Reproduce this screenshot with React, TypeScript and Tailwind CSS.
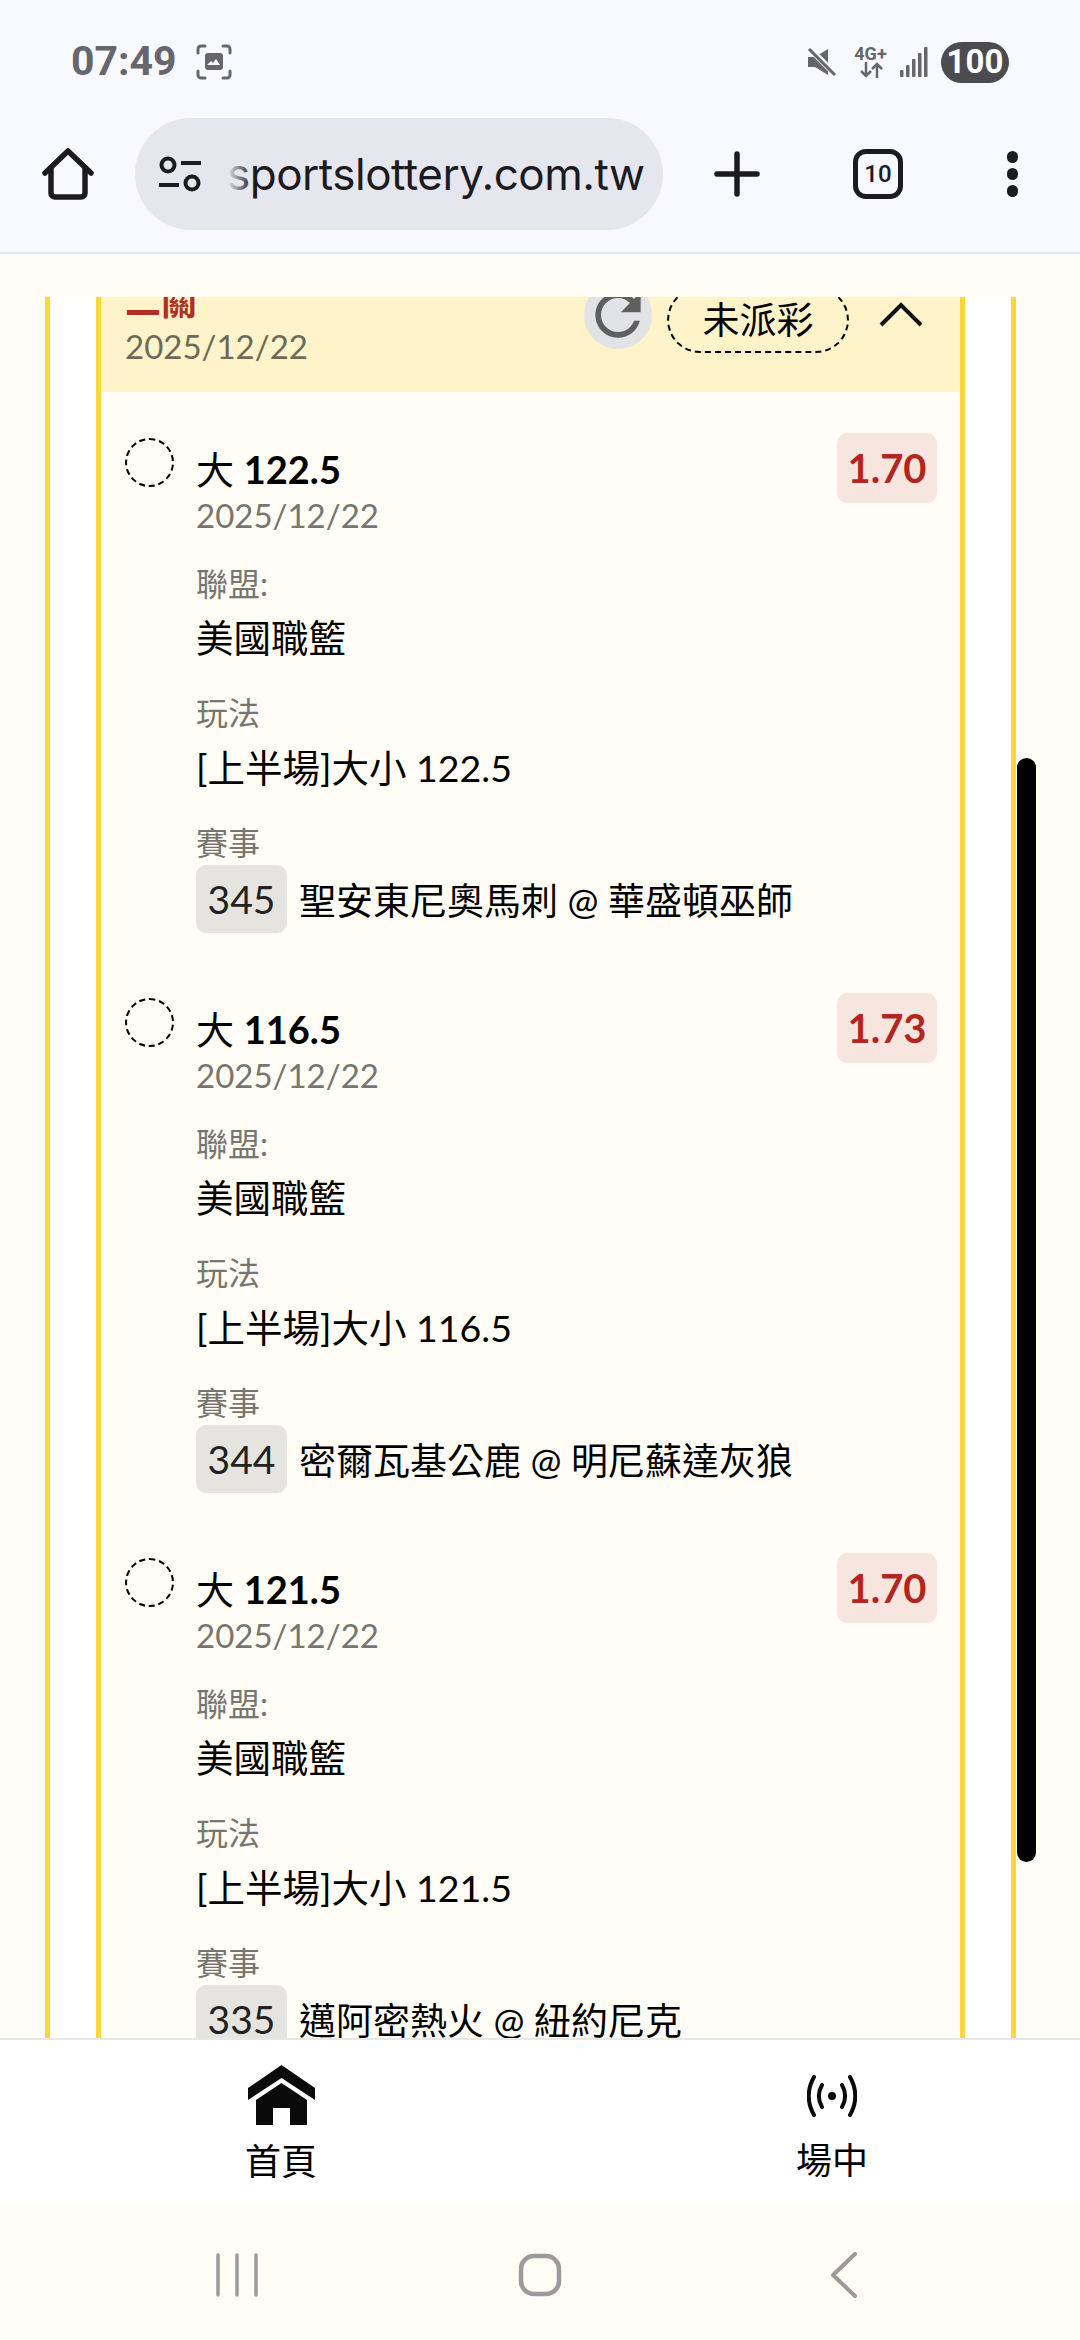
import React from "react";

const cjk = "font-['Lato','Noto_Sans_CJK_TC',sans-serif]";

function Bet({ title, odds, play, no, match }: { title: string; odds: string; play: string; no: string; match: string }) {
  return (
    <div className="flex h-[560px] pl-[24px] pr-[23px] pt-[41px]">
      <div className="w-[49px] h-[49px] rounded-full border-2 border-dashed border-black mr-[22px] mt-[5px] shrink-0" />
      <div className="flex-1 min-w-0">
        <div className="flex justify-between items-start">
          <div className="pt-[13px]">
            <div className="text-[38px] leading-[46px] text-black">
              大 <span className="font-bold">{title}</span>
            </div>
            <div className="text-[33px] leading-[46px] text-[#77756f]">2025/12/22</div>
          </div>
          <div className="w-[100px] h-[70px] rounded-[10px] bg-[#f7e6df] flex items-center justify-center text-[#b3261e] text-[40px] font-bold">
            {odds}
          </div>
        </div>
        <div className="mt-[28px] text-[32px] leading-[36px] text-[#77756f]">聯盟:</div>
        <div className="mt-[14px] text-[37.5px] leading-[44px] text-black">美國職籃</div>
        <div className="mt-[35px] text-[32px] leading-[36px] text-[#77756f]">玩法</div>
        <div className="mt-[15px] text-[37.5px] leading-[44px] text-black">[上半場]大小 {play}</div>
        <div className="mt-[35px] text-[32px] leading-[36px] text-[#77756f]">賽事</div>
        <div className="flex items-center mt-[4px]">
          <div className="w-[91px] h-[68px] rounded-[10px] bg-[#e5e4df] flex items-center justify-center text-[39px] text-[#222]">{no}</div>
          <div className="ml-[12px] pt-[3px] text-[37px] text-black">{match}</div>
        </div>
      </div>
    </div>
  );
}

export default function App() {
  return (
    <div className={`w-[1080px] h-[2340px] flex flex-col overflow-hidden bg-[#fffdf5] ${cjk}`}>
      <div className="h-[254px] shrink-0 bg-[#f8f8ff] border-b-[2px] border-[#e4e4ec] flex flex-col">
        <div className="h-[120px] flex items-center justify-between pl-[71px] pr-[71px] pt-[4px]">
          <div className="flex items-center gap-[19px]">
            <span className="font-['Roboto',sans-serif] font-bold text-[41px] text-[#66666c]">07:49</span>
            <svg width="36" height="36" viewBox="0 0 36 36" fill="none" stroke="#66666c" strokeWidth="3" strokeLinecap="round">
              <path d="M2 9V5a3 3 0 0 1 3-3h4M27 2h4a3 3 0 0 1 3 3v4M34 27v4a3 3 0 0 1-3 3h-4M9 34H5a3 3 0 0 1-3-3v-4" />
              <rect x="9" y="9" width="18" height="17" rx="3" fill="#66666c" stroke="none" />
              <path d="M11 21l4-4 2 2 3-4 4 6z" fill="#f8f8ff" stroke="none" />
            </svg>
          </div>
          <div className="flex items-center">
            <svg width="30" height="28" viewBox="0 0 30 28" className="mr-[17px]">
              <path d="M1 9h7L21 1v26L8 19H1z" fill="#66666c" />
              <path d="M2 0l27 27" stroke="#f8f8ff" strokeWidth="6" />
              <path d="M2 1l26 26" stroke="#66666c" strokeWidth="3" />
            </svg>
            <div className="flex flex-col items-center mr-[13px] w-[33px] text-[#66666c]">
              <span className="font-['Roboto',sans-serif] font-bold text-[18px] leading-[16px]">4G+</span>
              <svg width="26" height="16" viewBox="0 0 26 16" fill="none" stroke="#66666c" strokeWidth="2.5">
                <path d="M8 0v14M3 9l5 5 5-5M19 16V2M14 7l5-5 5 5" />
              </svg>
            </div>
            <svg width="28" height="30" viewBox="0 0 28 30" className="mr-[13px]" fill="#66666c">
              <rect x="0" y="23" width="3.5" height="7" rx="1" />
              <rect x="6" y="18" width="3.5" height="12" rx="1" />
              <rect x="12" y="12" width="3.5" height="18" rx="1" />
              <rect x="18" y="6" width="3.5" height="24" rx="1" />
              <rect x="24" y="0" width="3.5" height="30" rx="1" />
            </svg>
            <div className="w-[68px] h-[41px] rounded-full bg-[#4c4c50] flex items-center justify-center text-white font-['Roboto',sans-serif] font-bold text-[33px]">100</div>
          </div>
        </div>
        <div className="flex items-center h-[110px] mt-[-1px]">
          <div className="w-[135px] shrink-0 flex justify-center">
            <svg width="52" height="52" viewBox="0 0 52 52" fill="none" stroke="#1b1b20" strokeWidth="5.5" strokeLinejoin="round" strokeLinecap="round">
              <path d="M3 25 26 3l23 22" />
              <path d="M9 20v25a4 4 0 0 0 4 4h26a4 4 0 0 0 4-4V20" />
            </svg>
          </div>
          <div className="w-[528px] shrink-0 h-[112px] rounded-full bg-[#e6e6ee] flex items-center pl-[24px] overflow-hidden">
            <svg width="42" height="36" viewBox="0 0 42 36" fill="none" stroke="#1b1b20" strokeWidth="4" className="shrink-0">
              <circle cx="9" cy="9" r="6.5" />
              <path d="M22 7h20M0 29h20" />
              <circle cx="33" cy="27" r="6.5" />
            </svg>
            <div className="relative ml-[26px] text-[44px] font-['Inter',sans-serif] text-[#1b1b20] tracking-[-0.5px] overflow-hidden whitespace-nowrap">
              sportslottery.com.tw
              <span className="absolute left-0 top-0 h-full w-[26px] bg-gradient-to-r from-[#e6e6ee] to-transparent" />
            </div>
          </div>
          <div className="w-[148px] shrink-0 flex justify-center">
            <svg width="46" height="46" viewBox="0 0 46 46" stroke="#1b1b20" strokeWidth="5.5" strokeLinecap="round">
              <path d="M23 3v40M3 23h40" />
            </svg>
          </div>
          <div className="w-[134px] shrink-0 flex justify-center">
            <div className="w-[50px] h-[50px] shrink-0 rounded-[13px] border-[5.5px] border-[#1b1b20] flex items-center justify-center text-[24px] font-['Roboto',sans-serif] font-medium text-[#1b1b20]">10</div>
          </div>
          <div className="flex-1 flex flex-col items-center gap-[5.5px]">
            <div className="w-[11.5px] h-[11.5px] rounded-full bg-[#1b1b20]" />
            <div className="w-[11.5px] h-[11.5px] rounded-full bg-[#1b1b20]" />
            <div className="w-[11.5px] h-[11.5px] rounded-full bg-[#1b1b20]" />
          </div>
        </div>
      </div>

      <div className="h-[43px] shrink-0 bg-[#fffdf5]" />

      <div className="relative h-[1741px] shrink-0 overflow-hidden">
        <div className="ml-[45px] w-[971px] h-full bg-white border-x-[5px] border-[#fad83c] px-[46px]">
          <div className="h-full bg-[#fffdf5] border-x-[5px] border-[#fad83c]">
            <div className="h-[95px] bg-[#fff3c9] flex relative overflow-hidden">
              <div className="pl-[24px]">
                <div className="mt-[-18px] text-[36px] leading-[44px] font-bold text-[#b0301f]">二關</div>
                <div className="text-[33px] leading-[46px] text-[#6e6a5a]">2025/12/22</div>
              </div>
              <div className="flex-1" />
              <div className="flex items-start">
                <div className="w-[68px] h-[68px] mt-[-16px] rounded-full bg-[#e2e3e6] shrink-0">
                  <svg width="68" height="68" viewBox="0 0 24 24" fill="#5f5f5f">
                    <path d="M17.65 6.35C16.2 4.9 14.21 4 12 4c-4.42 0-7.99 3.58-7.99 8s3.57 8 7.99 8c3.73 0 6.84-2.55 7.73-6h-2.08c-.82 2.33-3.04 4-5.65 4-3.31 0-6-2.69-6-6s2.69-6 6-6c1.66 0 3.14.69 4.22 1.78L13 11h7V4l-2.35 2.35z" />
                  </svg>
                </div>
                <div className="ml-[15px] w-[182px] h-[66px] mt-[-10px] rounded-[33px] border-2 border-dashed border-black flex items-center justify-center text-[37px] text-black shrink-0">未派彩</div>
                <div className="ml-[29px] mr-[36px] mt-[4px]">
                  <svg width="46" height="26" viewBox="0 0 46 26" fill="none" stroke="#111" strokeWidth="4">
                    <path d="M3 24 23 4l20 20" />
                  </svg>
                </div>
              </div>
            </div>
            <Bet title="122.5" odds="1.70" play="122.5" no="345" match="聖安東尼奧馬刺 @ 華盛頓巫師" />
            <Bet title="116.5" odds="1.73" play="116.5" no="344" match="密爾瓦基公鹿 @ 明尼蘇達灰狼" />
            <Bet title="121.5" odds="1.70" play="121.5" no="335" match="邁阿密熱火 @ 紐約尼克" />
          </div>
        </div>
        <div className="absolute left-[1017px] top-[461px] w-[19px] h-[1104px] rounded-full bg-black" />
      </div>

      <div className="h-[167px] shrink-0 bg-white border-t-[2px] border-[#e8e8e8] flex">
        <div className="w-[562px] shrink-0 flex flex-col items-center pt-[25px]">
          <svg width="67" height="60" viewBox="0 0 67 60" fill="#0a0a0a">
            <path d="M33.5 0 67 23v12L33.5 13 0 35V23z" />
            <path d="M33.5 18 59 35v25H42V43H25v17H8V35z" />
          </svg>
          <div className="mt-[14px] text-[36px] leading-[44px] text-black">首頁</div>
        </div>
        <div className="flex-1 flex flex-col items-center pt-[35px] pl-[22px]">
          <svg width="50" height="42" viewBox="0 0 50 42" fill="none" stroke="#0a0a0a" strokeWidth="4" strokeLinecap="round">
            <circle cx="25" cy="21" r="4" fill="#0a0a0a" stroke="none" />
            <path d="M15 10c-4 7-4 15 0 22M35 10c4 7 4 15 0 22M7 2C0 14 0 28 7 40M43 2c7 12 7 26 0 38" />
          </svg>
          <div className="mt-[21px] text-[36px] leading-[44px] text-black">場中</div>
        </div>
      </div>

      <div className="flex-1 bg-[#fffdf5] flex items-center pt-[5px]">
        <div className="w-[477px] flex justify-end pr-[218px]">
          <svg width="44" height="44" viewBox="0 0 44 44" stroke="#9b9b9b" strokeWidth="3.5" strokeLinecap="round">
            <path d="M3 2v40M22 2v40M41 2v40" />
          </svg>
        </div>
        <div className="ml-[41px]">
          <svg width="44" height="44" viewBox="0 0 44 44" fill="none" stroke="#9b9b9b" strokeWidth="4.5">
            <rect x="3" y="3" width="38" height="38" rx="13" />
          </svg>
        </div>
        <div className="ml-[268px]">
          <svg width="28" height="46" viewBox="0 0 28 46" fill="none" stroke="#9b9b9b" strokeWidth="4" strokeLinecap="round" strokeLinejoin="round">
            <path d="M25 2 3 23l22 21" />
          </svg>
        </div>
      </div>
    </div>
  );
}
